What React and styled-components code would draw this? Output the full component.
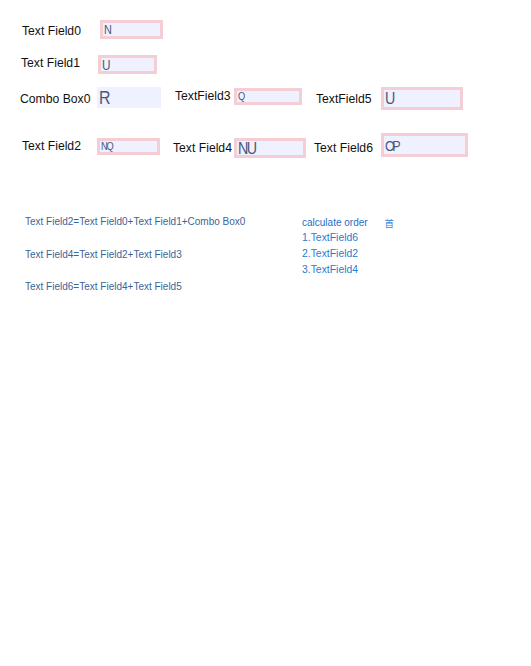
import React from "react";
import styled, { createGlobalStyle } from "styled-components";

const GlobalStyle = createGlobalStyle`
  html, body {
    margin: 0;
    padding: 0;
    background: #fff;
  }
  body {
    font-family: "Liberation Sans", Arial, sans-serif;
  }
`;

const Page = styled.div`
  width: 531px;
  height: 666px;
  background: #fff;
  overflow: hidden;
`;

const FormArea = styled.div`
  display: flex;
  flex-direction: column;
`;

const Row = styled.div`
  display: flex;
  align-items: flex-start;
  margin-top: ${(p) => p.$mt}px;
  height: ${(p) => p.$h}px;
`;

const Field = styled.div`
  display: flex;
  align-items: center;
  margin-left: ${(p) => p.$ml}px;
  margin-top: ${(p) => p.$dy || 0}px;
`;

const Label = styled.label`
  width: ${(p) => p.$w}px;
  font-size: 12.2px;
  color: #111;
  white-space: nowrap;
  margin-top: ${(p) => p.$dy || 0}px;
`;

const Box = styled.div`
  box-sizing: border-box;
  width: ${(p) => p.$w}px;
  height: ${(p) => p.$h}px;
  background: #eff2fe;
  border: ${(p) => (p.$plain ? "none" : "3px solid #f4cdd5")};
  padding-left: ${(p) => (p.$plain ? 2 : 0.5)}px;
  display: flex;
  align-items: center;
  overflow: hidden;
  white-space: nowrap;
`;

// the values in the boxes are drawn narrow and tall
const Value = styled.span`
  display: inline-block;
  font-size: ${(p) => p.$fs}px;
  line-height: 1;
  letter-spacing: ${(p) => p.$ls || 0}px;
  color: #4b5878;
  transform: scaleX(0.84);
  transform-origin: left center;
`;

const Notes = styled.div`
  display: flex;
  margin-top: 57px;
`;

const Formulas = styled.div`
  display: flex;
  flex-direction: column;
  margin-left: 25px;
  width: 277px;
`;

const Formula = styled.div`
  font-size: 10px;
  line-height: 14px;
  height: 14px;
  margin-bottom: 18.5px;
  color: #3d6496;
  white-space: nowrap;
`;

const Order = styled.div`
  display: flex;
  flex-direction: column;
  margin-top: 1px;
`;

const OrderHead = styled.div`
  display: flex;
  align-items: center;
  font-size: 10px;
  line-height: 14px;
  color: #1e6fc4;
`;

const OrderMark = styled.span`
  margin-left: 17px;
  font-family: "Noto Sans CJK SC", sans-serif;
  font-size: 9.5px;
  color: #3a86d6;
`;

const OrderItem = styled.div`
  font-size: 10.4px;
  line-height: 16px;
  color: #2a7bd0;
`;

export default function App() {
  return (
    <Page>
      <GlobalStyle />
      <FormArea>
        <Row $mt={20} $h={35}>
          <Field $ml={22}>
            <Label $w={78} $dy={2}>Text Field0</Label>
            <Box $w={63} $h={19}><Value $fs={13}>N</Value></Box>
          </Field>
        </Row>
        <Row $mt={0} $h={32}>
          <Field $ml={21}>
            <Label $w={77} $dy={-4}>Text Field1</Label>
            <Box $w={59} $h={19}><Value $fs={14}>U</Value></Box>
          </Field>
        </Row>
        <Row $mt={0} $h={46}>
          <Field $ml={20}>
            <Label $w={77} $dy={3}>Combo Box0</Label>
            <Box $plain $w={64} $h={21}><Value $fs={19}>R</Value></Box>
          </Field>
          <Field $ml={14} $dy={1}>
            <Label $w={59} $dy={-1}>TextField3</Label>
            <Box $w={68} $h={17}><Value $fs={11}>Q</Value></Box>
          </Field>
          <Field $ml={14}>
            <Label $w={65}>TextField5</Label>
            <Box $w={82} $h={23}><Value $fs={17}>U</Value></Box>
          </Field>
        </Row>
        <Row $mt={0} $h={25}>
          <Field $ml={22} $dy={5}>
            <Label $w={75} $dy={-1}>Text Field2</Label>
            <Box $w={63} $h={17}><Value $fs={11} $ls={-1.5}>NQ</Value></Box>
          </Field>
          <Field $ml={13} $dy={5}>
            <Label $w={61}>Text Field4</Label>
            <Box $w={72} $h={20}><Value $fs={17} $ls={-2}>NU</Value></Box>
          </Field>
          <Field $ml={8}>
            <Label $w={67} $dy={6}>Text Field6</Label>
            <Box $w={87} $h={24}><Value $fs={15} $ls={-3}>OP</Value></Box>
          </Field>
        </Row>
      </FormArea>
      <Notes>
        <Formulas>
          <Formula>Text Field2=Text Field0+Text Field1+Combo Box0</Formula>
          <Formula>Text Field4=Text Field2+Text Field3</Formula>
          <Formula>Text Field6=Text Field4+Text Field5</Formula>
        </Formulas>
        <Order>
          <OrderHead>
            calculate order
            <OrderMark>首</OrderMark>
          </OrderHead>
          <OrderItem>1.TextField6</OrderItem>
          <OrderItem>2.TextField2</OrderItem>
          <OrderItem>3.TextField4</OrderItem>
        </Order>
      </Notes>
    </Page>
  );
}
